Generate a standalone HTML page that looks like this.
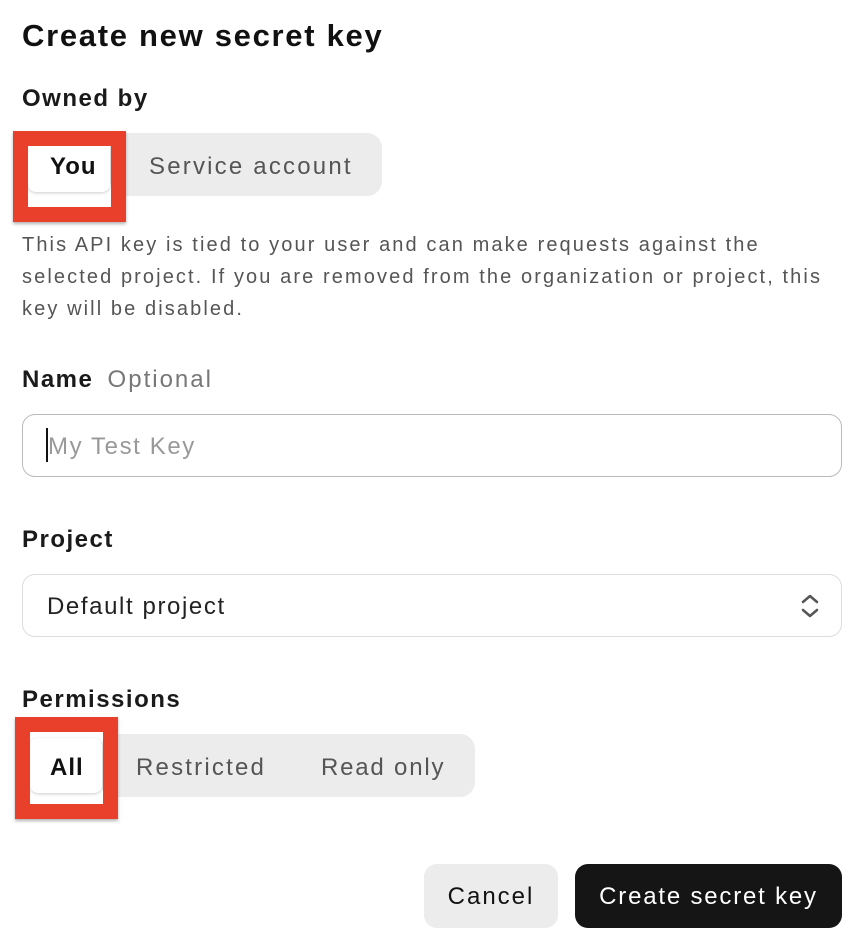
<!DOCTYPE html>
<html><head><style>
*{box-sizing:border-box;margin:0;padding:0}
body{width:868px;height:948px;background:#fff;font-family:"Liberation Sans",sans-serif;color:#111;position:relative;overflow:hidden;letter-spacing:1.8px}
.a{position:absolute;white-space:nowrap}
.lbl{font-size:24px;font-weight:600;color:#1a1a1a;letter-spacing:1.5px}
.pill{position:absolute;background:#ececec;border-radius:15px}
.red{position:absolute;border:15px solid #e8402a;box-shadow:0 2px 3px rgba(0,0,0,.3)}
.seg{position:absolute;background:#fff;border-radius:8px;box-shadow:0 1px 3px rgba(0,0,0,.2)}
.gt{font-size:24px;color:#555;font-weight:500;letter-spacing:2.2px}
.box{position:absolute;left:22px;width:820px;height:63px;border:1.5px solid #bbb;border-radius:13px}
</style></head><body>
<div class="a" style="left:22px;top:18px;font-size:31px;font-weight:600;letter-spacing:1.7px">Create new secret key</div>
<div class="a lbl" style="left:22px;top:85px">Owned by</div>
<div class="pill" style="left:110px;top:133px;width:272px;height:63px"></div>
<div class="seg" style="left:28px;top:140px;width:82px;height:52px"></div>
<div class="red" style="left:13px;top:131px;width:113px;height:91px"></div>
<div class="a" style="left:50px;top:153px;font-size:24px;font-weight:600;letter-spacing:1px">You</div>
<div class="a gt" style="left:149px;top:153px">Service account</div>
<div class="a" style="left:22px;top:229px;font-size:20px;line-height:32px;color:#555;letter-spacing:2.1px">This API key is tied to your user and can make requests against the<br>selected project. If you are removed from the organization or project, this<br>key will be disabled.</div>
<div class="a lbl" style="left:22px;top:366px">Name <span style="font-weight:400;color:#777;margin-left:6px;letter-spacing:2px">Optional</span></div>
<div class="box" style="top:414px"></div>
<div class="a" style="left:46px;top:428px;width:2px;height:34px;background:#111"></div>
<div class="a" style="left:48px;top:433px;font-size:24px;color:#999;letter-spacing:1.6px">My Test Key</div>
<div class="a lbl" style="left:22px;top:526px">Project</div>
<div class="box" style="top:574px;border-color:#ddd"></div>
<div class="a" style="left:47px;top:593px;font-size:24px;color:#222;letter-spacing:1.6px">Default project</div>
<svg class="a" style="left:800px;top:593px" width="20" height="26" viewBox="0 0 20 26"><path d="M3 9 L10 3 L17 9 M3 17 L10 23 L17 17" fill="none" stroke="#555" stroke-width="2.5" stroke-linecap="round" stroke-linejoin="round"/></svg>
<div class="a lbl" style="left:22px;top:686px">Permissions</div>
<div class="pill" style="left:100px;top:734px;width:375px;height:63px"></div>
<div class="seg" style="left:30px;top:738px;width:72px;height:55px"></div>
<div class="red" style="left:15px;top:717px;width:103px;height:102px"></div>
<div class="a" style="left:50px;top:754px;font-size:24px;font-weight:600;letter-spacing:1px">All</div>
<div class="a gt" style="left:136px;top:754px">Restricted</div>
<div class="a gt" style="left:321px;top:754px;letter-spacing:1.8px">Read only</div>
<div class="a" style="left:424px;top:864px;width:134px;height:64px;background:#ececec;border-radius:13px;font-size:24px;text-align:center;line-height:66px;color:#111;letter-spacing:2px">Cancel</div>
<div class="a" style="left:575px;top:864px;width:267px;height:64px;background:#151515;border-radius:13px;font-size:24px;text-align:center;line-height:66px;color:#fff;letter-spacing:1.8px">Create secret key</div>
</body></html>
